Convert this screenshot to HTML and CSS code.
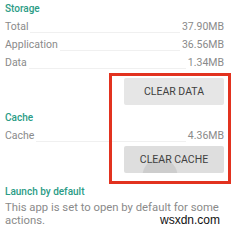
FILE: index.html
```html
<!DOCTYPE html>
<html lang="en">
<head>
  <meta charset="UTF-8">
  <meta name="viewport" content="width=device-width, initial-scale=1.0">
  <title>App info</title>
  <link rel="stylesheet" href="styles.css">
</head>
<body>
  <div class="page">
    <div class="section-title">Storage</div>
    <div class="row"><span>Total</span><span class="fill"></span><span class="value">37.90MB</span></div>
    <div class="row"><span>Application</span><span class="fill"></span><span class="value">36.56MB</span></div>
    <div class="row"><span>Data</span><span class="fill"></span><span class="value">1.34MB</span></div>
    <div class="actions first">
      <button class="btn">CLEAR DATA</button>
    </div>

    <div class="section-title cache">Cache</div>
    <div class="row"><span>Cache</span><span class="fill"></span><span class="value">4.36MB</span></div>
    <div class="actions second">
      <button class="btn pressed">CLEAR CACHE</button>
    </div>

    <div class="section-title launch">Launch by default</div>
    <p class="note">This app is set to open by default for some actions.</p>

    <div class="highlight"></div>
    <div class="watermark">wsxdn.com</div>
  </div>
</body>
</html>
```

FILE: styles.css
```css
body {
  margin: 0;
  font-family: Roboto, "Noto Sans", sans-serif;
  background: #fff;
  color: #8a8a8a;
}
.page {
  position: relative;
  width: 233px;
  height: 230px;
  overflow: hidden;
  padding: 0 9px 0 5px;
  box-sizing: border-box;
  font-size: 10.5px;
}
.section-title {
  height: 18px;
  line-height: 18px;
  color: #2b9c86;
  font-size: 10px;
  font-weight: 500;
}
.section-title.cache {
  margin-top: 4px;
}
.section-title.launch {
  margin-top: 10px;
}
.row {
  display: flex;
  height: 18px;
  line-height: 18px;
}
.fill {
  flex: 1;
  height: 14px;
  margin: 0 2px;
  border-bottom: 1px solid #f0f0f0;
}
.value {
  text-align: right;
}
.actions {
  display: flex;
  justify-content: flex-end;
}
.actions.first {
  margin-top: 6px;
}
.actions.second {
  margin-top: 1px;
}
.btn {
  width: 100px;
  height: 27px;
  border: none;
  border-radius: 2px;
  background: #e6e6e6;
  color: #3f3f3f;
  font-family: Roboto, "Noto Sans", sans-serif;
  font-size: 10.5px;
  padding: 0;
}
.btn.pressed {
  background: radial-gradient(circle at 36px 30px, #cdcdcd 17px, #dedede 18px);
}
.note {
  margin: 0;
  font-size: 11.3px;
  line-height: 13px;
}
.highlight {
  position: absolute;
  left: 109px;
  top: 73px;
  width: 122px;
  height: 111px;
  border: 3px solid #e2321f;
  box-sizing: border-box;
}
.watermark {
  position: absolute;
  left: 160px;
  top: 215px;
  font-family: "Liberation Sans", Arial, sans-serif;
  font-size: 12px;
  line-height: 11px;
  color: #111;
}
```
